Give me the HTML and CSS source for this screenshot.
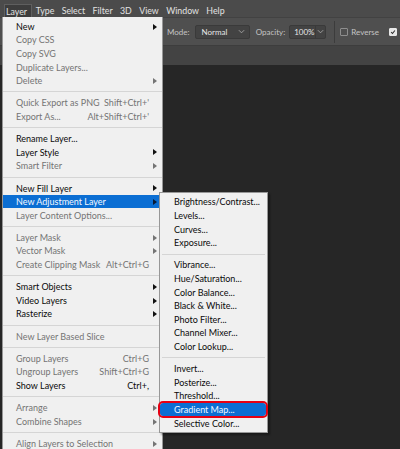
FILE: index.html
```html
<!DOCTYPE html>
<html>
<head>
<meta charset="utf-8">
<link rel="stylesheet" href="styles.css">
</head>
<body>
<div class="app">
  <div class="menubar">
    <span class="mb-item open">Layer</span>
    <span class="mb-item">Type</span>
    <span class="mb-item">Select</span>
    <span class="mb-item">Filter</span>
    <span class="mb-item">3D</span>
    <span class="mb-item">View</span>
    <span class="mb-item">Window</span>
    <span class="mb-item">Help</span>
  </div>
  <div class="options">
    <span class="opt-label">Mode:</span>
    <div class="select mode"><span>Normal</span><svg class="chev" viewBox="0 0 8 5"><polyline points="1,1 4,4 7,1"/></svg></div>
    <span class="opt-label opacity-label">Opacity:</span>
    <div class="select opacity"><span>100%</span><span class="sel-btn"><svg class="chev" viewBox="0 0 8 5"><polyline points="1,1 4,4 7,1"/></svg></span></div>
    <span class="vdiv"></span>
    <span class="check"></span>
    <span class="opt-label">Reverse</span>
    <span class="check checked"><svg viewBox="0 0 8 8"><polyline points="1.5,4 3.3,6 6.5,2"/></svg></span>
  </div>
  <div class="tabbar"></div>
  <div class="canvas"></div>

  <div class="menu main-menu">
    <div class="item arrow">New</div>
    <div class="item dis">Copy CSS</div>
    <div class="item dis">Copy SVG</div>
    <div class="item dis">Duplicate Layers...</div>
    <div class="item dis arrow">Delete</div>
    <div class="sep"></div>
    <div class="item dis"><span>Quick Export as PNG</span><span class="sc">Shift+Ctrl+'</span></div>
    <div class="item dis"><span>Export As...</span><span class="sc">Alt+Shift+Ctrl+'</span></div>
    <div class="sep"></div>
    <div class="item">Rename Layer...</div>
    <div class="item arrow">Layer Style</div>
    <div class="item dis arrow">Smart Filter</div>
    <div class="sep"></div>
    <div class="item arrow">New Fill Layer</div>
    <div class="item arrow active">New Adjustment Layer</div>
    <div class="item dis">Layer Content Options...</div>
    <div class="sep"></div>
    <div class="item dis arrow">Layer Mask</div>
    <div class="item dis arrow">Vector Mask</div>
    <div class="item dis"><span>Create Clipping Mask</span><span class="sc">Alt+Ctrl+G</span></div>
    <div class="sep"></div>
    <div class="item arrow">Smart Objects</div>
    <div class="item arrow">Video Layers</div>
    <div class="item arrow">Rasterize</div>
    <div class="sep"></div>
    <div class="item dis">New Layer Based Slice</div>
    <div class="sep"></div>
    <div class="item dis"><span>Group Layers</span><span class="sc">Ctrl+G</span></div>
    <div class="item dis"><span>Ungroup Layers</span><span class="sc">Shift+Ctrl+G</span></div>
    <div class="item"><span>Show Layers</span><span class="sc">Ctrl+,</span></div>
    <div class="sep"></div>
    <div class="item dis arrow">Arrange</div>
    <div class="item dis arrow">Combine Shapes</div>
    <div class="sep"></div>
    <div class="item dis arrow">Align Layers to Selection</div>
  </div>

  <div class="menu sub-menu">
    <div class="item">Brightness/Contrast...</div>
    <div class="item">Levels...</div>
    <div class="item">Curves...</div>
    <div class="item">Exposure...</div>
    <div class="sep"></div>
    <div class="item">Vibrance...</div>
    <div class="item">Hue/Saturation...</div>
    <div class="item">Color Balance...</div>
    <div class="item">Black &amp; White...</div>
    <div class="item">Photo Filter...</div>
    <div class="item">Channel Mixer...</div>
    <div class="item">Color Lookup...</div>
    <div class="sep"></div>
    <div class="item">Invert...</div>
    <div class="item">Posterize...</div>
    <div class="item">Threshold...</div>
    <div class="item active marked">Gradient Map...</div>
    <div class="item">Selective Color...</div>
  </div>
</div>
</body>
</html>
```

FILE: styles.css
```css
* { box-sizing: border-box; }
html, body { margin: 0; padding: 0; }
body {
  width: 400px;
  height: 449px;
  overflow: hidden;
  background: #262626;
  font-family: Lato, "Liberation Sans", sans-serif;
}
.app {
  position: relative;
  width: 400px;
  height: 449px;
  display: flex;
  flex-direction: column;
  overflow: hidden;
}
.menubar {
  height: 17px;
  background: #4b4b4b;
  display: flex;
  align-items: stretch;
  padding: 4px 0 0 4px;
  color: #e2e2e2;
  font-size: 8.8px;
}
.mb-item {
  padding: 0 3.7px;
  display: flex;
  align-items: center;
  line-height: 13px;
}
.mb-item.open {
  background: #3d3d3d;
  border: 1px solid #5f5f5f;
  border-bottom: none;
  padding: 0 4px 0 1px;
}
.options {
  height: 28px;
  background: #4f4f4f;
  border-top: 1px solid #424242;
  display: flex;
  align-items: center;
  padding-left: 167px;
  color: #c4c4c4;
  font-size: 8px;
}
.opt-label { white-space: nowrap; }
.select {
  height: 14px;
  background: #434343;
  border: 1px solid #3a3a3a;
  border-radius: 2px;
  display: flex;
  align-items: center;
  color: #e6e6e6;
  font-size: 8px;
}
.mode {
  width: 71px;
  margin-left: 5px;
  padding: 0 4px 0 6px;
  justify-content: space-between;
}
.opacity-label { margin-left: 6px; }
.opacity {
  width: 37px;
  margin-left: 4px;
  padding-left: 4px;
  justify-content: space-between;
}
.sel-btn {
  width: 10px;
  height: 100%;
  border-left: 1px solid #3a3a3a;
  display: flex;
  align-items: center;
  justify-content: center;
}
.chev { width: 7px; height: 5px; }
.chev polyline { fill: none; stroke: #a8a8a8; stroke-width: 1; }
.vdiv {
  width: 1px;
  height: 22px;
  background: #3c3c3c;
  margin: 0 6px 0 8px;
}
.check {
  width: 8px;
  height: 8px;
  border: 1px solid #8e8e8e;
  border-radius: 1px;
  margin-right: 3px;
  flex: none;
}
.check.checked {
  margin-left: 10px;
  background: #e8e8e8;
  border-color: #e8e8e8;
  display: flex;
}
.check.checked svg { width: 100%; height: 100%; }
.check.checked polyline { fill: none; stroke: #2a2a2a; stroke-width: 1.4; }
.tabbar {
  height: 20px;
  background: #434343;
  border-top: 1px solid #3d3d3d;
}
.canvas {
  flex: 1;
  background: #262626;
}

/* menus (overlays) */
.menu {
  position: absolute;
  background: #f0f0f0;
  border: 1px solid #979797;
  font-size: 9px;
  color: #0a0a0a;
}
.main-menu {
  left: 2px;
  top: 17px;
  width: 161px;
  height: 450px;
  padding-top: 2.5px;
  border-top: none;
}
.sub-menu {
  left: 159px;
  top: 192px;
  width: 109px;
  height: 241px;
  padding-top: 2.2px;
  box-shadow: 2px 2px 2px rgba(0,0,0,0.35);
}
.item {
  height: 13.6px;
  display: flex;
  align-items: center;
  white-space: nowrap;
  position: relative;
}
.main-menu .item { padding: 0 13px 0 13px; }
.sub-menu .item { padding: 0 6px 0 14px; }
.item > span:first-child { flex: 1; }
.item .sc { text-align: right; }
.item.dis { color: #747474; }
.item.active { background: #0b6ed3; color: #f4f8ff; }
.item.arrow::after {
  content: "";
  position: absolute;
  right: 5px;
  top: 4px;
  border-left: 4px solid #111;
  border-top: 3px solid transparent;
  border-bottom: 3px solid transparent;
}
.item.dis.arrow::after { border-left-color: #747474; }
.item.active.arrow::after { border-left-color: #0a1a33; }
.sep {
  height: 1px;
  background: #d5d5d5;
  margin: 4px 0 3.6px;
}
.sub-menu .sep { margin: 4px 2px 3.6px; }
.item.marked {
  outline: 2px solid #e60012;
  border-radius: 3px;
  margin: 0 1px 0 0;
}
```
